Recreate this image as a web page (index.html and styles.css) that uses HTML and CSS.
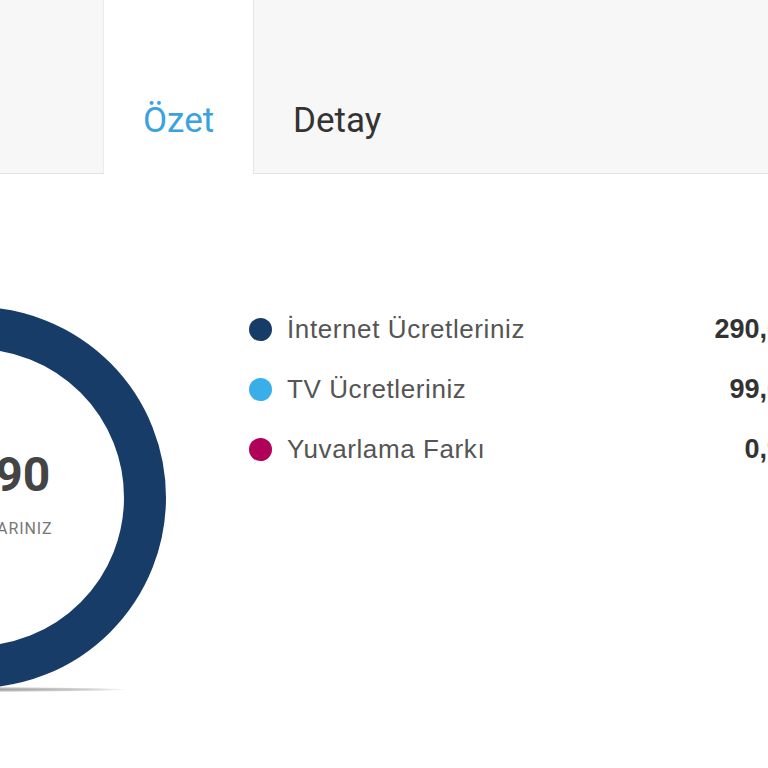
FILE: index.html
```html
<!DOCTYPE html>
<html lang="tr">
<head>
<meta charset="utf-8">
<title>Fatura Özeti</title>
<link rel="stylesheet" href="styles.css">
</head>
<body>
<div class="page">
  <nav class="tabs">
    <div class="tab tab-blank"></div>
    <div class="tab tab-active">Özet</div>
    <div class="tab tab-rest">Detay</div>
  </nav>
  <section class="summary">
    <div class="donut">
      <div class="donut-total">389,90</div>
      <div class="donut-label">FATURA TUTARINIZ</div>
    </div>
    <ul class="legend">
      <li class="legend-row">
        <span class="dot dot-navy"></span>
        <span class="legend-name">İnternet Ücretleriniz</span>
        <span class="legend-value">290,00</span>
      </li>
      <li class="legend-row">
        <span class="dot dot-sky"></span>
        <span class="legend-name">TV Ücretleriniz</span>
        <span class="legend-value">99,00</span>
      </li>
      <li class="legend-row">
        <span class="dot dot-berry"></span>
        <span class="legend-name">Yuvarlama Farkı</span>
        <span class="legend-value">0,90</span>
      </li>
    </ul>
  </section>
</div>
</body>
</html>
```

FILE: styles.css
```css
html, body {
  margin: 0;
  padding: 0;
  width: 768px;
  height: 768px;
  overflow: hidden;
  background: #ffffff;
}

.page {
  width: 768px;
  overflow: hidden;
}

.tabs {
  display: flex;
  height: 173px;
  background: #f7f7f7;
  border-bottom: 1px solid #e3e3e3;
  font-family: Roboto, "DejaVu Sans", sans-serif;
  font-size: 35px;
}

.tab {
  display: flex;
  align-items: flex-end;
  padding: 0 39px 32px;
  color: #333333;
}

.tab-blank {
  width: 103px;
  padding: 0;
  border-right: 1px solid #ebebeb;
}

.tab-active {
  background: #ffffff;
  color: #3aa3df;
  width: 71px;
  margin-bottom: -1px;
  padding-bottom: 33px;
}

.tab-rest {
  flex: 1;
  border-left: 1px solid #e6e6e6;
}

.summary {
  display: flex;
  align-items: flex-start;
  padding-top: 133px;
  height: 470px;
}

.donut {
  position: relative;
  flex: none;
  box-sizing: border-box;
  width: 381px;
  height: 381px;
  margin-left: -215px;
  border: 42px solid #173c68;
  border-radius: 50%;
  display: flex;
  flex-direction: column;
  align-items: center;
  justify-content: center;
  font-family: Roboto, "Liberation Sans", sans-serif;
}

.donut::after {
  content: "";
  position: absolute;
  left: 20px;
  right: 0;
  bottom: -46px;
  height: 5px;
  border-radius: 50%;
  background: radial-gradient(ellipse at center, rgba(0, 0, 0, 0.4) 0%, rgba(0, 0, 0, 0.2) 50%, rgba(0, 0, 0, 0) 75%);
}

.donut-total {
  font-size: 48px;
  font-weight: 700;
  color: #444444;
  line-height: 1;
  margin-top: -6px;
}

.donut-label {
  margin-top: 20px;
  font-size: 16px;
  color: #777777;
  letter-spacing: 0.9px;
}

.legend {
  list-style: none;
  margin: -8px 0 0 83px;
  padding: 0;
  width: 548px;
  flex: none;
  font-family: "Liberation Sans", Arial, sans-serif;
}

.legend-row {
  display: flex;
  align-items: center;
  height: 60px;
}

.dot {
  flex: none;
  width: 23px;
  height: 23px;
  border-radius: 50%;
  margin-right: 15px;
}

.dot-navy { background: #173c68; }
.dot-sky { background: #3aaee9; }
.dot-berry { background: #b0005a; }

.legend-name {
  flex: 1;
  font-size: 26px;
  letter-spacing: 0.6px;
  color: #555555;
}

.legend-value {
  font-size: 27px;
  font-weight: 700;
  color: #333333;
}
```
